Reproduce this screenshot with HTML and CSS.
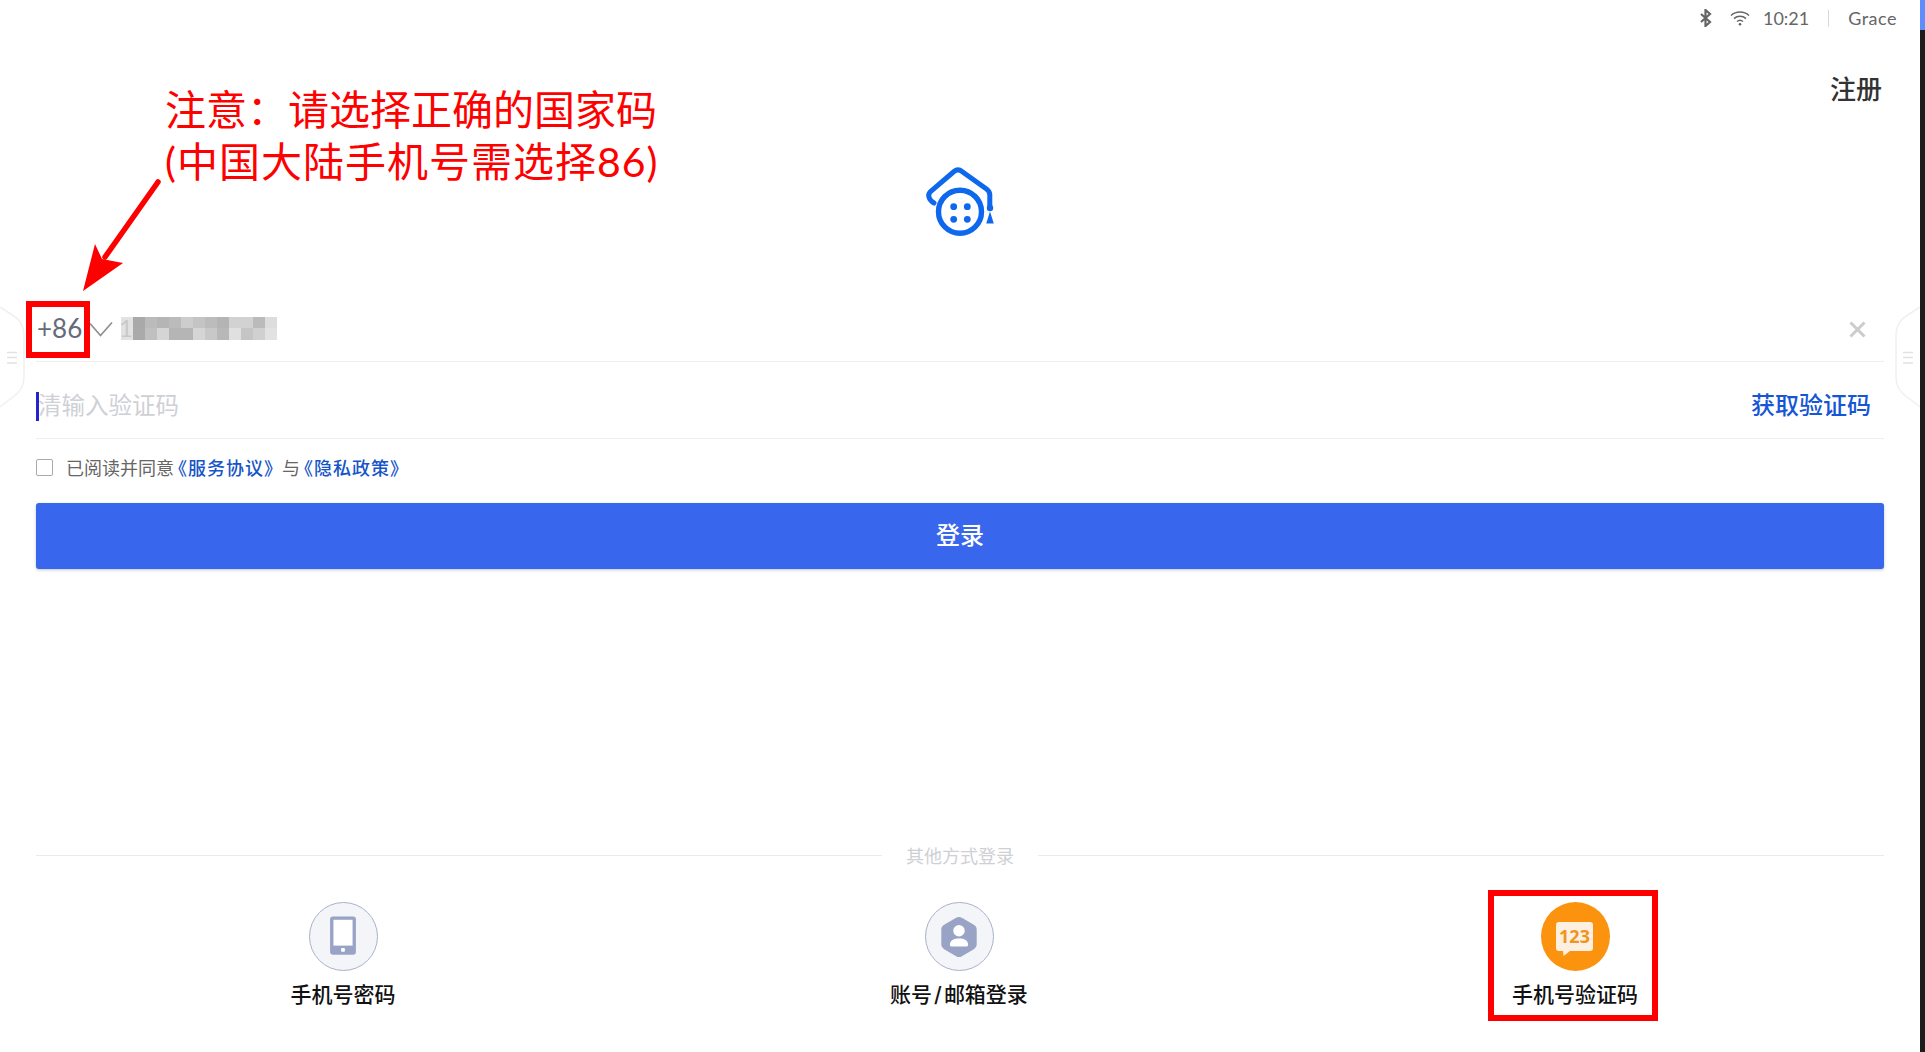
FILE: index.html
```html
<!DOCTYPE html>
<html lang="zh-CN">
<head>
<meta charset="utf-8">
<title>登录</title>
<link rel="stylesheet" href="styles.css">
</head>
<body>
<div class="window">
  <main class="screen">
    <div class="statusbar">
      <svg class="st-bt" viewBox="0 0 14 18" width="14" height="18"><path d="M2 5l9 8-4.500 4V1L11 5l-9 8" fill="none" stroke="#666" stroke-width="2.200"/></svg>
      <svg class="st-wifi" viewBox="0 0 20 16" width="20" height="16"><path d="M1 5.500c5-4.600 13-4.600 18 0M4 8.600c3.300-3 8.700-3 12 0M7 11.500c1.700-1.500 4.300-1.500 6 0" fill="none" stroke="#666" stroke-width="1.500"/><circle cx="10" cy="14.300" r="1.300" fill="#666"/></svg>
      <span class="st-time">10:21</span>
      <span class="st-sep"></span>
      <span class="st-user">Grace</span>
    </div>
    <div class="toprow"><a class="signup">注册</a></div>
    <div class="logo-row">
      <svg class="logo" viewBox="0 0 68 69" width="68" height="69">
        <path d="M8 35C3 32 1 27 4.500 23.500L28 3.500c2.500-2 5.500-2 8 0L60.500 21c2.500 1.800 3.300 3.500 3.300 6v11" fill="none" stroke="#0e68ee" stroke-width="5" stroke-linecap="round"/>
        <circle cx="34" cy="43.700" r="21.500" fill="none" stroke="#0e68ee" stroke-width="5.400"/>
        <circle cx="27.700" cy="38.700" r="3.400" fill="#0e68ee"/>
        <circle cx="41.300" cy="38.700" r="3.400" fill="#0e68ee"/>
        <circle cx="27.700" cy="51.300" r="3.400" fill="#0e68ee"/>
        <circle cx="41.300" cy="51.300" r="3.400" fill="#0e68ee"/>
        <circle cx="64" cy="40" r="3.200" fill="#0e68ee"/>
        <path d="M64 43.500L60.200 55.500h7.600z" fill="#0e68ee"/>
      </svg>
    </div>
    <section class="form">
      <div class="field phone">
        <span class="dial">+86</span>
        <svg class="chev" viewBox="0 0 24 16" width="24" height="16"><path d="M1 2.500l10.500 12L23 1.500" fill="none" stroke="#8f8f8f" stroke-width="1.700"/></svg>
        <span class="number">1
          <svg class="mosaic" viewBox="0 0 156 23" width="156" height="23" shape-rendering="crispEdges">
            <g>
              <rect class="mosaic-fade" x="0" y="0" width="12" height="23" fill="#ddd"/>
              <rect x="12" y="0" width="12" height="11" fill="#a9a9a9"/><rect x="24" y="0" width="12" height="11" fill="#bbb"/><rect x="36" y="0" width="12" height="11" fill="#b5b5b5"/><rect x="48" y="0" width="12" height="11" fill="#bbb"/><rect x="60" y="0" width="12" height="11" fill="#cdcdcd"/><rect x="72" y="0" width="12" height="11" fill="#c4c4c4"/><rect x="84" y="0" width="12" height="11" fill="#bcbcbc"/><rect x="96" y="0" width="12" height="11" fill="#b4b4b4"/><rect x="108" y="0" width="12" height="11" fill="#d2d2d2"/><rect x="120" y="0" width="12" height="11" fill="#d2d2d2"/><rect x="132" y="0" width="12" height="11" fill="#bbb"/><rect x="144" y="0" width="12" height="11" fill="#ddd"/>
              <rect x="12" y="11" width="12" height="12" fill="#aaa"/><rect x="24" y="11" width="12" height="12" fill="#c0c0c0"/><rect x="36" y="11" width="12" height="12" fill="#d5d5d5"/><rect x="48" y="11" width="12" height="12" fill="#b5b5b5"/><rect x="60" y="11" width="12" height="12" fill="#b5b5b5"/><rect x="72" y="11" width="12" height="12" fill="#d5d5d5"/><rect x="84" y="11" width="12" height="12" fill="#c8c8c8"/><rect x="96" y="11" width="12" height="12" fill="#b8b8b8"/><rect x="108" y="11" width="12" height="12" fill="#e0e0e0"/><rect x="120" y="11" width="12" height="12" fill="#c5c5c5"/><rect x="132" y="11" width="12" height="12" fill="#d0d0d0"/><rect x="144" y="11" width="12" height="12" fill="#e2e2e2"/>
            </g>
          </svg>
        </span>
        <svg class="clear" viewBox="0 0 17 17" width="17" height="17"><path d="M1.500 1.500l14 14M15.500 1.500l-14 14" stroke="#ccc" stroke-width="3"/></svg>
      </div>
      <div class="field code">
        <span class="caret"></span>
        <span class="placeholder">清输入验证码</span>
        <a class="getcode">获取验证码</a>
      </div>
      <div class="agree">
        <span class="checkbox"></span>
        <span class="agree-text">已阅读并同意 <a class="link-first">《服务协议》</a>与 <a>《隐私政策》</a></span>
      </div>
      <button class="submit">登录</button>
    </section>
    <section class="others">
      <div class="others-title"><span>其他方式登录</span></div>
      <div class="methods">
        <div class="method">
          <span class="badge">
            <svg viewBox="0 0 69 69" width="66" height="66"><rect x="21" y="13" width="27" height="40" rx="3" fill="#98a3c6"/><rect x="24.500" y="16.500" width="20" height="27" fill="#fff"/><rect x="32.500" y="46" width="4" height="4" rx="1" fill="#fff"/></svg>
          </span>
          <span class="method-label">手机号密码</span>
        </div>
        <div class="method">
          <span class="badge">
            <svg viewBox="0 0 69 69" width="66" height="66"><path d="M31.500 14.500c2-1.200 4-1.200 6 0l12.500 7.300c2 1.200 3 2.800 3 5v15.400c0 2.200-1 3.800-3 5l-12.500 7.300c-2 1.200-4 1.200-6 0L19 47.200c-2-1.200-3-2.800-3-5V26.800c0-2.200 1-3.800 3-5z" fill="#98a3c6"/><circle cx="34.500" cy="28" r="6" fill="#fff"/><path d="M25 42.500c0-4.500 4-6.500 9.500-6.500s9.500 2 9.500 6.500c0 1.500-1 2-2.500 2h-14c-1.500 0-2.500-.5-2.500-2z" fill="#fff"/></svg>
          </span>
          <span class="method-label">账号<span class="slash">/</span>邮箱登录</span>
        </div>
        <div class="method current">
          <span class="badge orange">
            <svg viewBox="0 0 69 69" width="69" height="69"><path d="M18 20h31a3 3 0 0 1 3 3v23a3 3 0 0 1-3 3H29l-6.500 5-.5-5h-4a3 3 0 0 1-3-3V23a3 3 0 0 1 3-3z" fill="#fdf0e0"/><text x="33.500" y="41" text-anchor="middle" class="otp">123</text></svg>
          </span>
          <span class="method-label">手机号验证码</span>
        </div>
      </div>
    </section>

    <svg class="handle handle-left" viewBox="0 0 26 104" width="26" height="104"><path d="M0 2l14 9c7 4.500 10 10 10 19v42c0 9-3 14.500-10 19L0 102" fill="#fff" stroke="#f0f0f0" stroke-width="1.500"/><path d="M7 47.500h10M7 52.500h10M7 58h10" stroke="#e2e2e2" stroke-width="1.500"/></svg>
    <svg class="handle handle-right" viewBox="0 0 26 104" width="26" height="104"><path d="M26 2l-14 9C5 15.500 2 21 2 30v42c0 9 3 14.500 10 19l14 11" fill="#fff" stroke="#f0f0f0" stroke-width="1.500"/><path d="M9 47.500h10M9 52.500h10M9 58h10" stroke="#e2e2e2" stroke-width="1.500"/></svg>

    <div class="note">
      <p>注意：请选择正确的国家码</p>
      <p class="note-second">(中国大陆手机号需选择86)</p>
    </div>
    <svg class="note-arrow" viewBox="0 0 90 120" width="90" height="120"><path d="M78 7L25 82" stroke="#f00" stroke-width="5.500" stroke-linecap="round"/><path d="M3 116l12-47 7 15 21 4z" fill="#f00"/></svg>
  </main>
  <aside class="edge"><span class="edge-top"></span></aside>
</div>
</body>
</html>
```
FILE: styles.css
```css
*, *::before, *::after { box-sizing: border-box; }
html, body { margin: 0; padding: 0; height: 100%; }
body {
  font-family: "Noto Sans CJK SC", "Noto Sans", sans-serif;
  background: #1c1c1c;
  overflow: hidden;
}
a { text-decoration: none; }
p { margin: 0; }
.window { display: flex; width: 1925px; height: 1052px; }
.screen {
  position: relative;
  width: 1920px;
  height: 1052px;
  background: #fff;
  display: flex;
  flex-direction: column;
}
.edge { width: 5px; background: #1c1c1c; }
.edge-top { display: block; height: 30px; background: #5f8dfb; }

.statusbar {
  height: 30px;
  padding-top: 6px;
  display: flex;
  align-items: center;
  justify-content: flex-end;
  padding-right: 23px;
  color: #666;
  font-family: Lato, "Noto Sans", sans-serif;
  font-size: 18px;
  line-height: 24px;
}
.st-bt { margin-right: 17px; }
.st-wifi { margin-right: 13px; }
.st-sep { width: 1px; height: 17px; background: #d8d8d8; margin: 0 19px 0 19px; }
.st-user { letter-spacing: .5px; }

.toprow {
  height: 120px;
  padding-bottom: 5px;
  display: flex;
  align-items: center;
  justify-content: flex-end;
  padding-right: 38px;
}
.signup { font-size: 26px; color: #333; font-weight: 500; line-height: 36px; }

.logo-row { display: flex; justify-content: center; margin-top: 18px; height: 69px; }
.logo { display: block; overflow: visible; }

.form {
  margin-top: 63px;
  padding: 0 36px;
  display: flex;
  flex-direction: column;
}
.field {
  display: flex;
  align-items: center;
  border-bottom: 1px solid #eeeeee;
}
.phone { height: 62px; padding-bottom: 6px; }
.dial {
  position: relative;
  font-family: Lato, "Noto Sans", sans-serif;
  font-size: 26px;
  line-height: 36px;
  color: #666b7a;
  width: 45px;
  margin-left: 1px;
  white-space: nowrap;
}
.dial::after {
  content: "";
  position: absolute;
  left: -11px;
  right: -8px;
  top: -9px;
  bottom: -12px;
  border: 6px solid #f00;
}
.chev { margin-left: 7px; margin-top: 2px; }
.number {
  position: relative;
  margin-left: 6px;
  font-family: Lato, "Noto Sans", sans-serif;
  font-size: 24px;
  color: #555;
  flex: 1;
  line-height: 30px;
  height: 30px;
}
.mosaic { position: absolute; left: 2px; top: 4px; }
.mosaic-fade { opacity: .85; }
.clear { margin-right: 18px; margin-top: 3px; }

.code { height: 77px; position: relative; padding-top: 7px; }
.caret { position: absolute; left: 0; top: 30px; width: 3px; height: 29px; background: #2323d0; }
.placeholder { font-size: 23.500px; color: #cfd0d6; margin-left: 2px; flex: 1; line-height: 34px; }
.getcode { font-size: 24px; color: #1555d6; font-weight: 500; margin-right: 13px; line-height: 34px; }

.agree { height: 64px; display: flex; align-items: center; padding-bottom: 8px; }
.checkbox {
  width: 17px; height: 17px;
  border: 1.500px solid #a9a9a9;
  border-radius: 2px;
  background: #fff;
  margin-right: 13px;
}
.agree-text { font-size: 18px; color: #666; line-height: 26px; }
.agree-text a {
  color: #1555c8;
  font-weight: 500;
  font-feature-settings: "halt";
  letter-spacing: 1px;
  padding-right: 3px;
}
.link-first { margin-right: 5px; }

.submit {
  height: 66px;
  padding: 0 0 6px;
  border: 0;
  border-radius: 3px;
  background: #3866ec;
  color: #fff;
  font-family: inherit;
  font-size: 24px;
  font-weight: 500;
  box-shadow: 0 1px 3px rgba(40, 60, 120, .3);
}

.others {
  margin-top: auto;
  padding: 0 36px 43px;
}
.others-title {
  height: 28px;
  display: flex;
  align-items: center;
  gap: 24px;
  font-size: 18px;
  color: #cfd0d6;
}
.others-title::before, .others-title::after {
  content: "";
  flex: 1;
  height: 1px;
  background: #eaeaea;
}
.methods { display: flex; margin: 33px 1px 0 -1px; }
.method {
  flex: 1;
  display: flex;
  flex-direction: column;
  align-items: center;
  position: relative;
}
.badge {
  width: 69px;
  height: 69px;
  border-radius: 50%;
  background: #f4f5f9;
  border: 1.500px solid #aab1c9;
  display: flex;
  align-items: center;
  justify-content: center;
}
.badge.orange { background: #fb930f; border: 0; }
.otp { font-family: "Open Sans", sans-serif; font-size: 18px; font-weight: 700; fill: #f0931f; }
.method-label {
  margin-top: 10px;
  font-family: Inter, "Noto Sans CJK SC", sans-serif;
  font-size: 21px;
  line-height: 28px;
  color: #111;
  white-space: nowrap;
  font-weight: 500;
}
.slash { padding: 0 2px; }
.current::after {
  content: "";
  position: absolute;
  left: 50%;
  margin-left: -87px;
  width: 170px;
  top: -12px;
  height: 131px;
  border: 6px solid #f00;
}

.handle { position: absolute; top: 305px; }
.handle-left { left: 0; }
.handle-right { right: 0; }

.note {
  position: absolute;
  left: 165px;
  top: 84px;
  color: #f00;
  font-family: Lato, "Noto Sans CJK SC", sans-serif;
  font-size: 41px;
  line-height: 52px;
  white-space: nowrap;
}
.note-second { letter-spacing: 1px; }
.note-arrow { position: absolute; left: 80px; top: 175px; }
```
